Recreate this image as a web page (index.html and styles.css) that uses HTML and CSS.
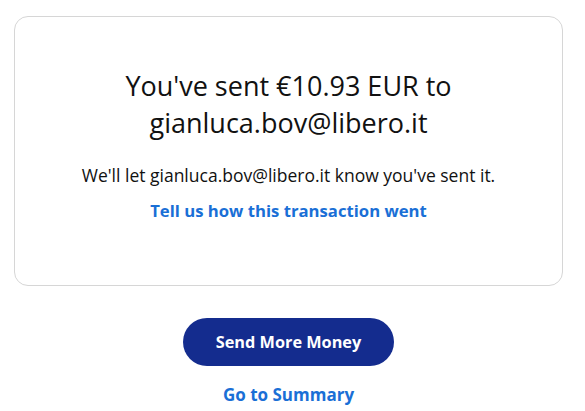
FILE: index.html
```html
<!DOCTYPE html>
<html>
<head>
<meta charset="utf-8">
<link rel="stylesheet" href="styles.css">
</head>
<body>
<div class="page">
  <div class="card">
    <h1 class="title">You've sent €10.93 EUR to<br>gianluca.bov@libero.it</h1>
    <p class="note">We'll let gianluca.bov@libero.it know you've sent it.</p>
    <a class="link" href="#">Tell us how this transaction went</a>
  </div>
  <div class="actions">
    <a class="btn" href="#">Send More Money</a>
    <a class="link summary" href="#">Go to Summary</a>
  </div>
</div>
</body>
</html>
```
FILE: styles.css
```css
html, body {
  margin: 0;
  padding: 0;
  background: #ffffff;
}
body {
  font-family: "Open Sans", "Noto Sans", sans-serif;
  color: #111111;
}
.page {
  padding: 16px 22px 0 14px;
}
.card {
  border: 1px solid #d6d6d6;
  border-radius: 14px;
  height: 270px;
  box-sizing: border-box;
  padding-top: 50px;
  display: flex;
  flex-direction: column;
  align-items: center;
  text-align: center;
}
.title {
  margin: 0;
  font-size: 27px;
  font-weight: 400;
  line-height: 37px;
  color: #111;
}
.note {
  margin: 23px 0 0 0;
  font-size: 17.5px;
  line-height: 22px;
}
.link {
  color: #1a6fd6;
  font-weight: 700;
  font-size: 16.7px;
  line-height: 20px;
  text-decoration: none;
  margin-top: 15px;
}
.actions {
  display: flex;
  flex-direction: column;
  align-items: center;
  padding-top: 32px;
}
.btn {
  display: flex;
  align-items: center;
  justify-content: center;
  width: 211px;
  height: 48px;
  border-radius: 24px;
  background: #142c8e;
  color: #ffffff;
  font-weight: 700;
  font-size: 16.3px;
  text-decoration: none;
}
.actions .summary {
  margin-top: 19px;
  font-size: 17px;
}
```
